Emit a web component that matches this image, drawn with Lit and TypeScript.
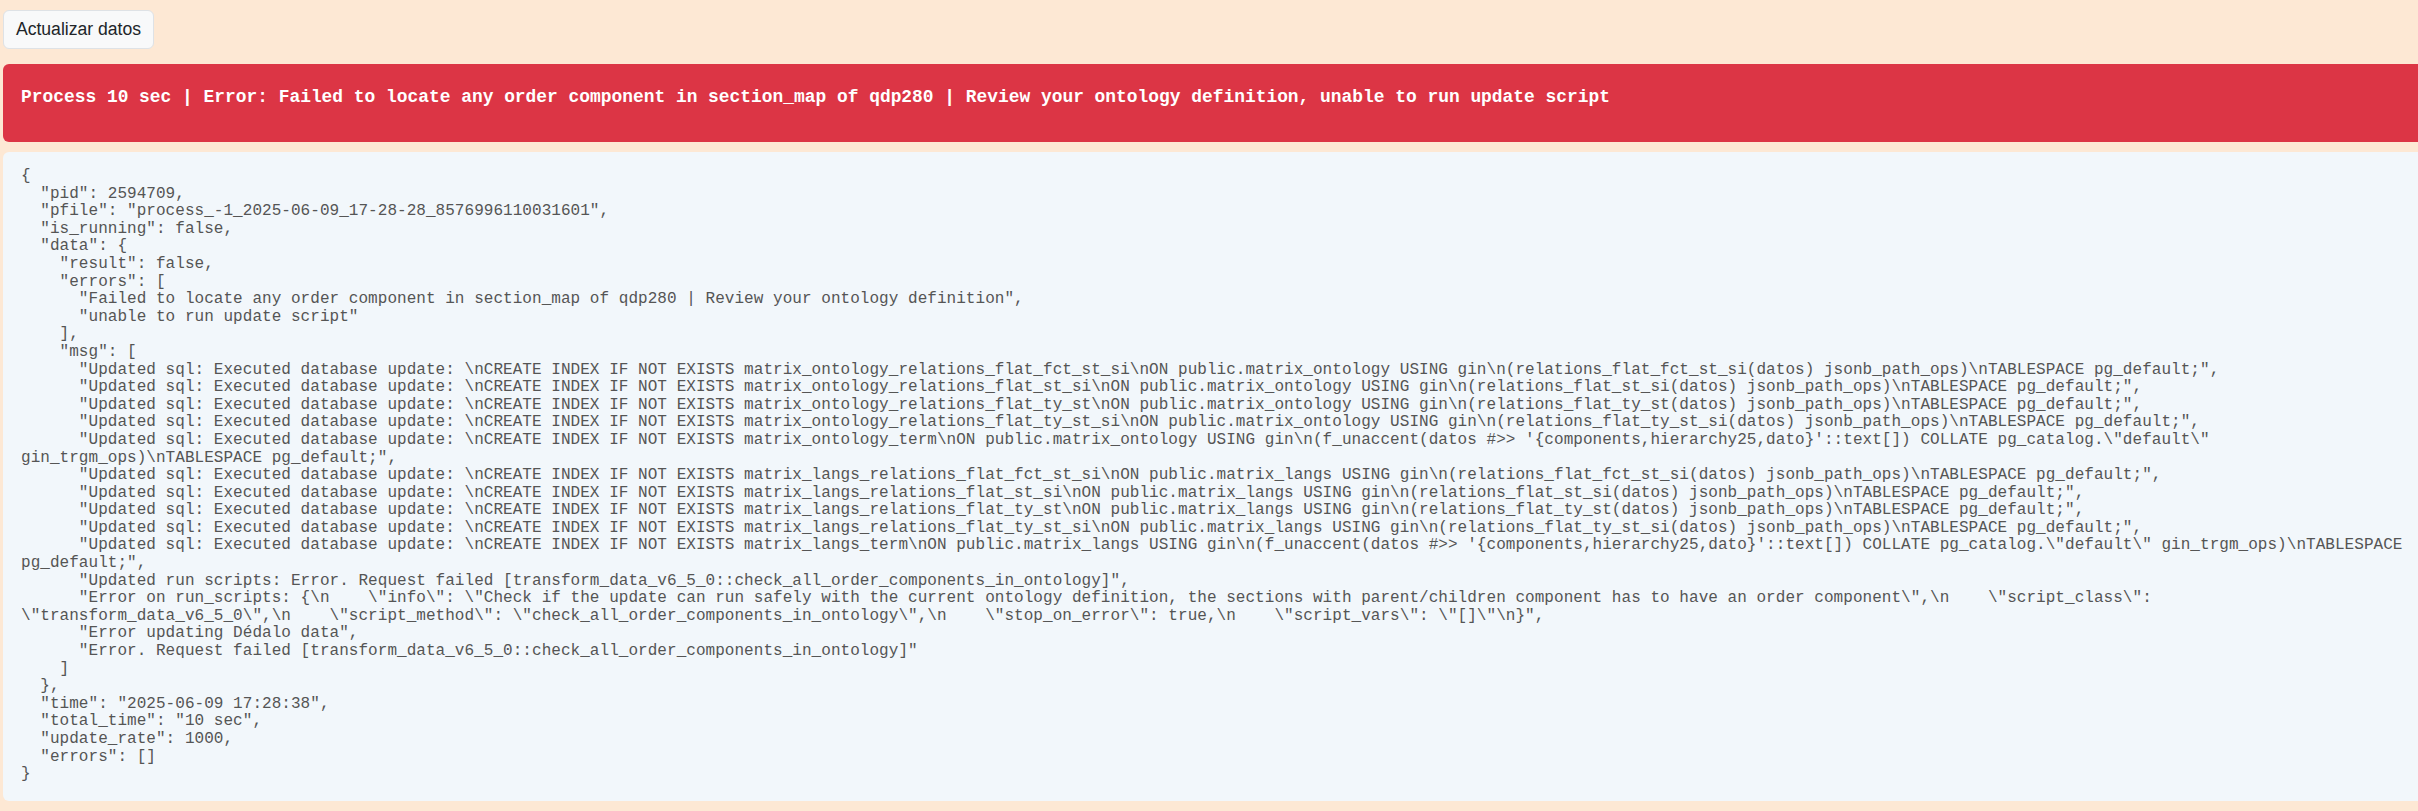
import { LitElement, html, css } from "lit";
import { customElement } from "lit/decorators.js";

const TITLE =
  "Process 10 sec | Error: Failed to locate any order component in section_map of qdp280 | Review your ontology definition, unable to run update script";

const DUMP = String.raw`{
  "pid": 2594709,
  "pfile": "process_-1_2025-06-09_17-28-28_8576996110031601",
  "is_running": false,
  "data": {
    "result": false,
    "errors": [
      "Failed to locate any order component in section_map of qdp280 | Review your ontology definition",
      "unable to run update script"
    ],
    "msg": [
      "Updated sql: Executed database update: \nCREATE INDEX IF NOT EXISTS matrix_ontology_relations_flat_fct_st_si\nON public.matrix_ontology USING gin\n(relations_flat_fct_st_si(datos) jsonb_path_ops)\nTABLESPACE pg_default;",
      "Updated sql: Executed database update: \nCREATE INDEX IF NOT EXISTS matrix_ontology_relations_flat_st_si\nON public.matrix_ontology USING gin\n(relations_flat_st_si(datos) jsonb_path_ops)\nTABLESPACE pg_default;",
      "Updated sql: Executed database update: \nCREATE INDEX IF NOT EXISTS matrix_ontology_relations_flat_ty_st\nON public.matrix_ontology USING gin\n(relations_flat_ty_st(datos) jsonb_path_ops)\nTABLESPACE pg_default;",
      "Updated sql: Executed database update: \nCREATE INDEX IF NOT EXISTS matrix_ontology_relations_flat_ty_st_si\nON public.matrix_ontology USING gin\n(relations_flat_ty_st_si(datos) jsonb_path_ops)\nTABLESPACE pg_default;",
      "Updated sql: Executed database update: \nCREATE INDEX IF NOT EXISTS matrix_ontology_term\nON public.matrix_ontology USING gin\n(f_unaccent(datos #>> '{components,hierarchy25,dato}'::text[]) COLLATE pg_catalog.\"default\"
gin_trgm_ops)\nTABLESPACE pg_default;",
      "Updated sql: Executed database update: \nCREATE INDEX IF NOT EXISTS matrix_langs_relations_flat_fct_st_si\nON public.matrix_langs USING gin\n(relations_flat_fct_st_si(datos) jsonb_path_ops)\nTABLESPACE pg_default;",
      "Updated sql: Executed database update: \nCREATE INDEX IF NOT EXISTS matrix_langs_relations_flat_st_si\nON public.matrix_langs USING gin\n(relations_flat_st_si(datos) jsonb_path_ops)\nTABLESPACE pg_default;",
      "Updated sql: Executed database update: \nCREATE INDEX IF NOT EXISTS matrix_langs_relations_flat_ty_st\nON public.matrix_langs USING gin\n(relations_flat_ty_st(datos) jsonb_path_ops)\nTABLESPACE pg_default;",
      "Updated sql: Executed database update: \nCREATE INDEX IF NOT EXISTS matrix_langs_relations_flat_ty_st_si\nON public.matrix_langs USING gin\n(relations_flat_ty_st_si(datos) jsonb_path_ops)\nTABLESPACE pg_default;",
      "Updated sql: Executed database update: \nCREATE INDEX IF NOT EXISTS matrix_langs_term\nON public.matrix_langs USING gin\n(f_unaccent(datos #>> '{components,hierarchy25,dato}'::text[]) COLLATE pg_catalog.\"default\" gin_trgm_ops)\nTABLESPACE
pg_default;",
      "Updated run scripts: Error. Request failed [transform_data_v6_5_0::check_all_order_components_in_ontology]",
      "Error on run_scripts: {\n    \"info\": \"Check if the update can run safely with the current ontology definition, the sections with parent/children component has to have an order component\",\n    \"script_class\":
\"transform_data_v6_5_0\",\n    \"script_method\": \"check_all_order_components_in_ontology\",\n    \"stop_on_error\": true,\n    \"script_vars\": \"[]\"\n}",
      "Error updating Dédalo data",
      "Error. Request failed [transform_data_v6_5_0::check_all_order_components_in_ontology]"
    ]
  },
  "time": "2025-06-09 17:28:38",
  "total_time": "10 sec",
  "update_rate": 1000,
  "errors": []
}`;

@customElement("app-root")
export class AppRoot extends LitElement {
  static styles = css`
    :host {
      display: block;
      background: #fde8d4;
      padding: 10px 0 10px 3px;
      box-sizing: border-box;
      height: 811px;
      overflow: hidden;
    }
    .btn {
      display: block;
      width: 151px;
      height: 39px;
      padding: 0;
      box-sizing: border-box;
      background: #f8f9fa;
      border: 1px solid #dee2e6;
      border-radius: 6px;
      color: #212529;
      font-family: "Liberation Sans", Arial, sans-serif;
      font-size: 17.6px;
      white-space: nowrap;
    }
    .alert {
      margin-top: 15px;
      height: 78px;
      box-sizing: border-box;
      padding: 21px 0 0 18px;
      background: #dc3545;
      border-radius: 6px 0 0 6px;
      color: #fff;
    }
    .title {
      margin: 0;
      font-family: "Liberation Mono", monospace;
      font-size: 17.9px;
      font-weight: 700;
      line-height: 24px;
      white-space: pre;
    }
    .dump {
      margin-top: 10px;
      height: 649px;
      box-sizing: border-box;
      padding: 16px 0 0 18px;
      background: #f2f7fb;
      border-radius: 6px 0 0 6px;
    }
    pre {
      margin: 0;
      font-family: "Liberation Mono", monospace;
      font-size: 16px;
      line-height: 17.6px;
      letter-spacing: 0.04px;
      color: #555;
      white-space: pre;
    }
  `;

  render() {
    return html`
      <button class="btn">Actualizar datos</button>
      <div class="alert"><h5 class="title">${TITLE}</h5></div>
      <div class="dump"><pre>${DUMP}</pre></div>
    `;
  }
}
